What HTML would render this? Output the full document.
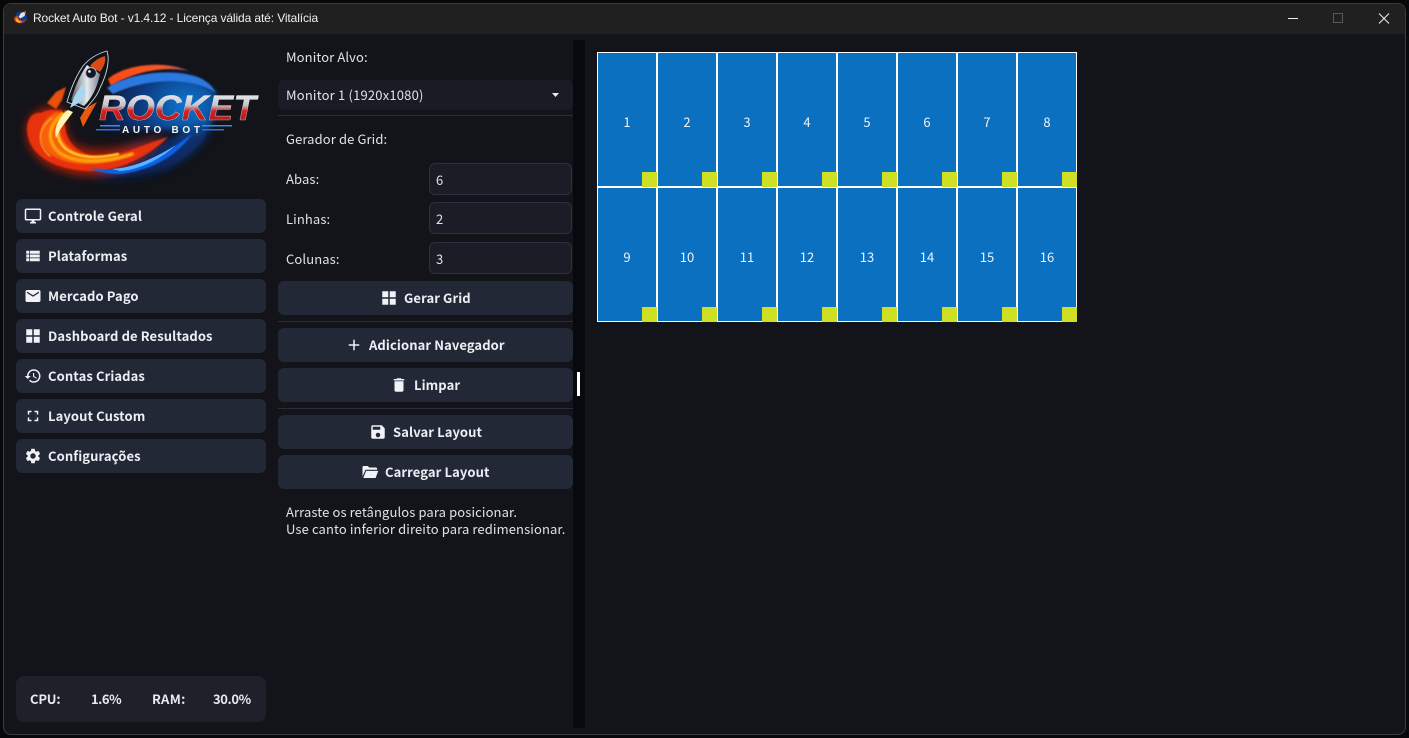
<!DOCTYPE html>
<html><head><meta charset="utf-8"><style>
*{box-sizing:border-box;margin:0;padding:0}
html,body{width:1409px;height:738px;overflow:hidden;background:#07080a}
body{position:relative;font-family:"Noto Sans CJK JP","Liberation Sans",sans-serif;font-size:13px;color:#dfe2e8}
.a{position:absolute;white-space:nowrap}
#win{position:absolute;left:3px;top:3px;width:1403px;height:732px;border:1px solid #3a3b3e;border-radius:8px;background:#12141a;overflow:hidden}
#tb{position:absolute;left:0;top:0;width:100%;height:30px;background:#202020}
.b{position:absolute;height:34px;background:#222836;border-radius:6px;color:#eceff4;font-weight:700;line-height:34px;letter-spacing:.1px}
.b svg{position:absolute;top:8px;width:18px;height:18px;fill:#f0f2f6}
.b span{position:absolute;top:0;white-space:nowrap}
.l{position:absolute;line-height:18px;white-space:nowrap;color:#dfe2e8;letter-spacing:.11px}
.in{position:absolute;left:429px;width:143px;height:32px;background:#1a1d26;border:1px solid #2a3040;border-radius:6px;line-height:31px;padding-left:6px}
.hr{position:absolute;left:278px;width:295px;height:1px;background:#2a2e3a}
.t{position:absolute;width:60px;height:135px;background:#0b70c0;border:1px solid #fff;color:#eef5fb;text-align:center;line-height:138px;font-size:13px}
.t i{position:absolute;right:-1px;bottom:-1px;width:15px;height:15px;background:#cfe024}
</style></head><body>
<div id="win"><div id="tb"></div></div>

<svg class="a" style="left:13px;top:10px" width="15" height="15" viewBox="0 0 15 15">
<circle cx="8" cy="7.500" r="6" fill="#123a8c"/><path d="M1 8C1 14 9 15 14 9 10 12 5 11 5 6 3 6 2 7 1 8z" fill="#ee3a0c"/><path d="M2.500 10C4 13 7 13 9.500 12 6.500 11 4.500 10 4 7.500z" fill="#ffb01a"/><path d="M13 1 8 3 5.500 7l2 1.500L11.500 6z" fill="#dfe3ea"/><path d="M13 1 10.500 2 12 3.500z" fill="#f0501a"/></svg>
<div class="a" style="left:33px;top:10px;line-height:17px;font-family:'Liberation Sans',sans-serif;font-size:12px;color:#f0f0f0;letter-spacing:-.11px">Rocket Auto Bot - v1.4.12 - Licença válida até: Vitalícia</div>

<svg class="a" style="left:1280px;top:10px" width="110" height="16" viewBox="0 0 110 16" fill="none">
<path d="M8 8.500h10" stroke="#f0f0f0"/><rect x="53.500" y="3.500" width="9" height="9" stroke="#5a5a5a"/><path d="M99 3.500l10 10M109 3.500l-10 10" stroke="#f0f0f0"/></svg>

<!-- logo -->
<svg class="a" style="left:16px;top:40px" width="250" height="152" viewBox="16 40 250 152">
<defs>
<filter id="f8" x="-30%" y="-30%" width="160%" height="160%"><feGaussianBlur stdDeviation="5"/></filter>
<filter id="f3" x="-30%" y="-30%" width="160%" height="160%"><feGaussianBlur stdDeviation="3"/></filter>
<filter id="f1" x="-20%" y="-20%" width="140%" height="140%"><feGaussianBlur stdDeviation=".7"/></filter>
<linearGradient id="txt" x1="0" y1="0" x2="0" y2="1"><stop offset="0" stop-color="#f8f8fa"/><stop offset=".42" stop-color="#c4c5cc"/><stop offset=".56" stop-color="#d8201c"/><stop offset=".9" stop-color="#a81a1c"/><stop offset="1" stop-color="#ffb060"/></linearGradient>
<radialGradient id="disc" cx=".75" cy=".3" r=".75"><stop offset="0" stop-color="#1078d0"/><stop offset=".5" stop-color="#0c3a80"/><stop offset="1" stop-color="#0a1430"/></radialGradient>
<linearGradient id="arc" x1="0" y1="0" x2="1" y2="0"><stop offset="0" stop-color="#ff4a10"/><stop offset=".7" stop-color="#f05a28"/><stop offset="1" stop-color="#8a4a90"/></linearGradient>
<linearGradient id="body" x1="0" y1="0" x2="1" y2="0"><stop offset="0" stop-color="#5a606c"/><stop offset=".55" stop-color="#e6e9ee"/><stop offset="1" stop-color="#7d8390"/></linearGradient>
</defs>
<path d="M118 92C150 68 190 68 215 92 222 112 205 150 165 170 135 180 110 178 95 170 130 165 165 150 185 130L100 130z" fill="url(#disc)" filter="url(#f3)"/>
<path d="M90 176C130 184 190 168 212 130L130 145z" fill="#0a2a66" filter="url(#f8)" opacity=".8"/>
<path d="M27 130C27 112 45 106 62 108L66 132C70 152 100 158 165 136 135 168 110 176 85 175 55 172 27 160 27 130z" fill="#e82406" filter="url(#f8)" opacity=".75"/>
<path d="M108 79C125 64 165 60 189 71 165 66 135 71 111 86z" fill="url(#arc)" filter="url(#f1)"/>
<path d="M107 88C130 72 175 68 200 78 208 82 213 87 216 93 195 78 150 76 113 94z" fill="#2a78e0" filter="url(#f1)"/>
<path d="M27 128C28 116 34 112 41 113 48 109 55 110 62 110L66 132C70 150 92 160 110 156 130 152 145 144 168 137 150 155 125 168 98 171 60 172 27 158 27 128z" fill="#e8300a" filter="url(#f1)"/>
<path d="M56 112C40 120 34 138 48 152 66 168 105 168 140 153 105 162 80 158 68 146 58 136 58 124 66 114z" fill="#f8600a" filter="url(#f1)"/>
<g fill="none" stroke-linecap="round" filter="url(#f1)">
<path d="M62 114C48 126 46 142 60 153 76 164 105 163 132 154" stroke="#ffa010" stroke-width="3.500"/>
<path d="M66 112C56 124 54 138 66 149 80 159 100 158 118 154" stroke="#ffd028" stroke-width="2.500"/>
<path d="M52 118C38 128 36 144 50 156" stroke="#ffb030" stroke-width="1.200"/>
</g>
<path d="M68 110C60 116 53 128 56 138 60 128 66 122 73 112z" fill="#fff4b0"/>
<path d="M90 168C120 173 150 165 170 150 178 144 185 139 192 134 178 155 150 172 118 174 107 174 97 172 90 168z" fill="#0a62ea" filter="url(#f1)"/>
<path d="M112 169C135 168 158 156 176 145 160 160 138 170 120 171z" fill="#58b4ff"/>
<path d="M47 103 56 92 66 87 62 100 56 109z" fill="#ea5010" filter="url(#f1)"/>
<path d="M97 102 83 127 80 118 86 108z" fill="#e85a10"/>
<g>
<path d="M107 51C96 54 88 60 83 66 76 76 71 88 67 102L85 109C92 102 98 94 100 88 107 74 110 60 107 51z" fill="#10131b" stroke="#d0d4dc" stroke-width=".9"/>
<path d="M105 56C98 58 93 62 90 66L100 72C104 66 106 62 105 56z" fill="#dc4a16"/>
<path d="M87 65C79 76 74 90 71 100L84 106C92 98 97 88 100 74z" fill="url(#body)"/>
<circle cx="91" cy="73" r="5.400" fill="#141722" stroke="#aeb3be"/>
<circle cx="89.500" cy="71.500" r="1.400" fill="#e8ecf2"/>
<path d="M82 84 74 97 70 108 82 101 86 92z" fill="#a8d8f0"/>
</g>
<rect x="100" y="125" width="20" height="1.500" fill="#3e8ce8"/><rect x="96" y="129" width="24" height="1.500" fill="#2f70d8"/>
<rect x="202" y="125" width="30" height="1.500" fill="#3e8ce8"/><rect x="202" y="129" width="22" height="1.500" fill="#2f70d8"/>
<text x="99" y="120" font-family="Liberation Sans" font-weight="700" font-style="italic" font-size="35" textLength="157" lengthAdjust="spacingAndGlyphs" fill="url(#txt)" stroke="#e8e8ec" stroke-width=".3">ROCKET</text>
<text x="122" y="133" font-family="Liberation Sans" font-weight="700" font-size="10" textLength="78" fill="#f4f6fa">AUTO BOT</text>
</svg>

<!-- sidebar -->
<div class="b" style="left:16px;top:199px;width:250px"><svg viewBox="0 0 24 24" style="left:8px"><path d="M21 2H3c-1.100 0-2 .900-2 2v12c0 1.100.900 2 2 2h7v2H8v2h8v-2h-2v-2h7c1.100 0 2-.900 2-2V4c0-1.100-.900-2-2-2zm0 14H3V4h18v12z"/></svg><span style="left:32px">Controle Geral</span></div>
<div class="b" style="left:16px;top:239px;width:250px"><svg viewBox="0 0 24 24" style="left:8px"><path d="M3 14h4v-4H3v4zm0 5h4v-4H3v4zM3 9h4V5H3v4zm5 5h13v-4H8v4zm0 5h13v-4H8v4zM8 5v4h13V5H8z"/></svg><span style="left:32px">Plataformas</span></div>
<div class="b" style="left:16px;top:279px;width:250px"><svg viewBox="0 0 24 24" style="left:8px"><path d="M20 4H4c-1.100 0-1.990.900-1.990 2L2 18c0 1.100.900 2 2 2h16c1.100 0 2-.900 2-2V6c0-1.100-.900-2-2-2zm0 4l-8 5-8-5V6l8 5 8-5v2z"/></svg><span style="left:32px">Mercado Pago</span></div>
<div class="b" style="left:16px;top:319px;width:250px"><svg viewBox="0 0 24 24" style="left:8px"><path d="M3 3h8v8H3zM13 3h8v8h-8zM3 13h8v8H3zM13 13h8v8h-8z"/></svg><span style="left:32px">Dashboard de Resultados</span></div>
<div class="b" style="left:16px;top:359px;width:250px"><svg viewBox="0 0 24 24" style="left:8px"><path d="M13 3c-4.970 0-9 4.030-9 9H1l3.890 3.890.070.140L9 12H6c0-3.870 3.130-7 7-7s7 3.130 7 7-3.130 7-7 7c-1.930 0-3.680-.790-4.940-2.060l-1.420 1.420C8.270 19.990 10.510 21 13 21c4.970 0 9-4.030 9-9s-4.030-9-9-9zm-1 5v5l4.280 2.540.720-1.210-3.500-2.080V8H12z"/></svg><span style="left:32px">Contas Criadas</span></div>
<div class="b" style="left:16px;top:399px;width:250px"><svg viewBox="0 0 24 24" style="left:8px"><path d="M7 14H5v5h5v-2H7v-3zm-2-4h2V7h3V5H5v5zm12 7h-3v2h5v-5h-2v3zM14 5v2h3v3h2V5h-5z"/></svg><span style="left:32px">Layout Custom</span></div>
<div class="b" style="left:16px;top:439px;width:250px"><svg viewBox="0 0 24 24" style="left:8px"><path d="M19.140 12.940c.040-.300.060-.610.060-.940 0-.320-.020-.640-.070-.940l2.030-1.580c.180-.140.230-.410.120-.610l-1.920-3.320c-.120-.220-.370-.290-.590-.220l-2.390.960c-.500-.380-1.030-.700-1.620-.940l-.360-2.540c-.040-.240-.240-.410-.480-.410h-3.840c-.240 0-.430.170-.470.410l-.360 2.540c-.590.240-1.130.570-1.620.940l-2.390-.960c-.220-.080-.470 0-.590.220L2.740 8.870c-.120.210-.080.470.120.610l2.030 1.580c-.050.300-.090.630-.090.940s.020.640.070.940l-2.030 1.580c-.180.140-.230.410-.120.610l1.920 3.320c.120.220.370.290.590.220l2.390-.960c.500.380 1.030.700 1.620.940l.360 2.540c.050.240.240.410.480.410h3.840c.240 0 .440-.170.470-.410l.360-2.540c.590-.240 1.130-.560 1.620-.940l2.390.960c.220.080.470 0 .590-.220l1.920-3.320c.120-.220.070-.470-.120-.610l-2.010-1.580zM12 15.600c-1.980 0-3.600-1.620-3.600-3.600s1.620-3.600 3.600-3.600 3.600 1.620 3.600 3.600-1.620 3.600-3.600 3.600z"/></svg><span style="left:32px">Configurações</span></div>

<div class="a" style="left:16px;top:676px;width:250px;height:46px;background:#1e2129;border-radius:8px"></div>
<div class="l" style="left:30px;top:690px;font-weight:700;color:#e8eaee;letter-spacing:-.2px">CPU:</div>
<div class="l" style="left:91px;top:690px;font-weight:700;color:#e8eaee;letter-spacing:-.5px">1.6%</div>
<div class="l" style="left:152px;top:690px;font-weight:700;color:#e8eaee;letter-spacing:.3px">RAM:</div>
<div class="l" style="left:213px;top:690px;font-weight:700;color:#e8eaee;letter-spacing:-.4px">30.0%</div>

<!-- middle -->
<div class="l" style="left:286px;top:48px">Monitor Alvo:</div>
<div class="a" style="left:278px;top:80px;width:295px;height:30px;background:#191c24;border-radius:6px"></div>
<div class="l" style="left:286px;top:86px;letter-spacing:.19px">Monitor 1 (1920x1080)</div>
<svg class="a" style="left:551px;top:92px" width="10" height="6"><path d="M1 1h7L4.500 5z" fill="#e8eaee"/></svg>
<div class="hr" style="top:115px"></div>
<div class="l" style="left:286px;top:130px">Gerador de Grid:</div>
<div class="l" style="left:286px;top:170px">Abas:</div><div class="in" style="top:163px">6</div>
<div class="l" style="left:286px;top:210px">Linhas:</div><div class="in" style="top:202px">2</div>
<div class="l" style="left:286px;top:250px">Colunas:</div><div class="in" style="top:242px">3</div>

<div class="b" style="left:278px;top:281px;width:295px"><svg viewBox="0 0 24 24" style="left:102px"><path d="M3 3h8v8H3zM13 3h8v8h-8zM3 13h8v8H3zM13 13h8v8h-8z"/></svg><span style="left:126px">Gerar Grid</span></div>
<div class="hr" style="top:321px"></div>
<div class="b" style="left:278px;top:328px;width:295px"><svg viewBox="0 0 24 24" style="left:67px"><path d="M19 13h-6v6h-2v-6H5v-2h6V5h2v6h6v2z"/></svg><span style="left:91px">Adicionar Navegador</span></div>
<div class="b" style="left:278px;top:368px;width:295px"><svg viewBox="0 0 24 24" style="left:112px"><path d="M6 19c0 1.100.900 2 2 2h8c1.100 0 2-.900 2-2V7H6v12zM19 4h-3.500l-1-1h-5l-1 1H5v2h14V4z"/></svg><span style="left:136px">Limpar</span></div>
<div class="hr" style="top:408px"></div>
<div class="b" style="left:278px;top:415px;width:295px"><svg viewBox="0 0 24 24" style="left:91px"><path d="M17 3H5c-1.110 0-2 .900-2 2v14c0 1.100.890 2 2 2h14c1.100 0 2-.900 2-2V7l-4-4zm-5 16c-1.660 0-3-1.340-3-3s1.340-3 3-3 3 1.340 3 3-1.340 3-3 3zm3-10H5V5h10v4z"/></svg><span style="left:115px">Salvar Layout</span></div>
<div class="b" style="left:278px;top:455px;width:295px"><svg viewBox="0 0 24 24" style="left:83px"><path d="M2 5.500C2 4.700 2.700 4 3.500 4H9l2 2h9c.800 0 1.500.700 1.500 1.500V9H6L2 18zM6.800 10.500H23L19.500 20H3z"/></svg><span style="left:107px">Carregar Layout</span></div>

<div class="l" style="left:286px;top:503px">Arraste os retângulos para posicionar.</div>
<div class="l" style="left:286px;top:520px">Use canto inferior direito para redimensionar.</div>

<div class="a" style="left:573px;top:40px;width:12px;height:688px;background:#08090c"></div>
<div class="a" style="left:577px;top:372px;width:3px;height:24px;background:#fff"></div>

<!-- grid -->
<div class="t" style="left:597px;top:52px">1<i></i></div>
<div class="t" style="left:657px;top:52px">2<i></i></div>
<div class="t" style="left:717px;top:52px">3<i></i></div>
<div class="t" style="left:777px;top:52px">4<i></i></div>
<div class="t" style="left:837px;top:52px">5<i></i></div>
<div class="t" style="left:897px;top:52px">6<i></i></div>
<div class="t" style="left:957px;top:52px">7<i></i></div>
<div class="t" style="left:1017px;top:52px">8<i></i></div>
<div class="t" style="left:597px;top:187px">9<i></i></div>
<div class="t" style="left:657px;top:187px">10<i></i></div>
<div class="t" style="left:717px;top:187px">11<i></i></div>
<div class="t" style="left:777px;top:187px">12<i></i></div>
<div class="t" style="left:837px;top:187px">13<i></i></div>
<div class="t" style="left:897px;top:187px">14<i></i></div>
<div class="t" style="left:957px;top:187px">15<i></i></div>
<div class="t" style="left:1017px;top:187px">16<i></i></div>
</body></html>
